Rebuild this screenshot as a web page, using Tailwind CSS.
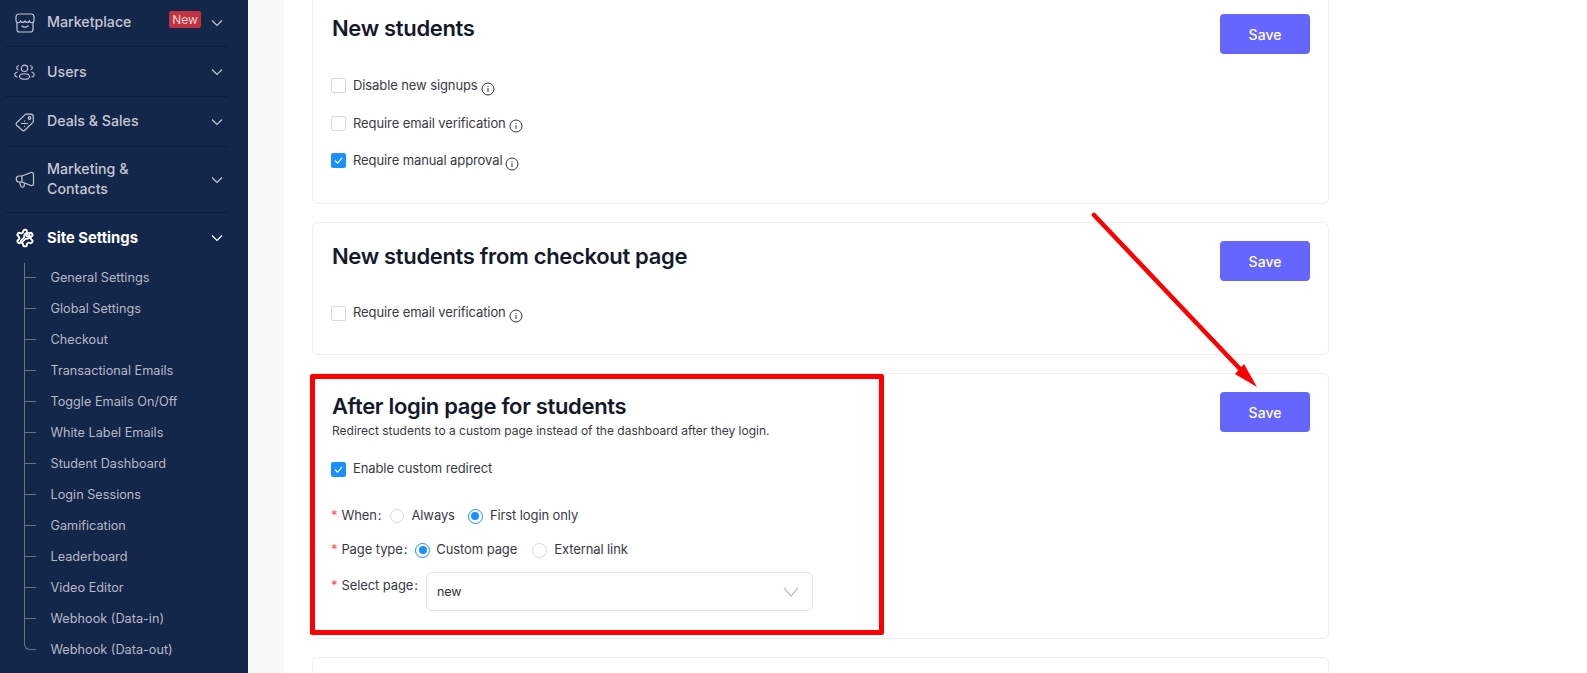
<!DOCTYPE html>
<html lang="en">
<head>
  <meta charset="UTF-8">
  <title>Site Settings</title>
  <script src="https://cdn.jsdelivr.net/npm/@tailwindcss/browser@4"></script>
</head>
<body class="h-[673px] overflow-hidden bg-white font-['Inter',sans-serif]">
<div class="relative flex h-[673px] overflow-hidden">

  <!-- Sidebar -->
  <aside class="w-[248px] h-full shrink-0 bg-[#14264a] text-[#c3c8d4] text-[14.2px] font-medium">
    <div class="mx-[5px] w-[223px]">
      <div class="h-[47px] flex items-center border-b border-[#0f1d38] pl-[10px] pr-[5px]">
        <svg class="w-[20px] h-[20px] mr-[12px] shrink-0" viewBox="0 0 20 20" fill="none" stroke="currentColor" stroke-width="1.2"><path d="M4 1h12a3 3 0 0 1 3 3v3.5a2.3 2.3 0 0 1-4.5.6 2.6 2.6 0 0 1-4.5 0 2.6 2.6 0 0 1-4.5 0A2.3 2.3 0 0 1 1 7.5V4a3 3 0 0 1 3-3Z"/><path d="M2 9.5V16.5A2.5 2.5 0 0 0 4.5 19h11a2.5 2.5 0 0 0 2.500-2.500V9.500"/><path d="M7 13c1.500 1.500 4.500 1.500 6 0" stroke-linecap="round"/></svg>
        <span class="mt-[-2px]">Marketplace</span>
        <span class="ml-auto mr-[10px] mt-[-7px] w-[32px] text-center bg-[#c2323f] text-[#f0d5d5] text-[12px] font-normal rounded-[2px] h-[17px] leading-[17px]">New</span>
        <svg class="w-[12px] h-[12px]" viewBox="0 0 12 12" fill="none" stroke="currentColor" stroke-width="1.2"><path d="M1 3.500 6 8.500 11 3.500"/></svg>
      </div>
      <div class="h-[50px] flex items-center border-b border-[#0f1d38] pl-[9px] pr-[5px]">
        <svg class="w-[21px] h-[16px] mr-[12px] shrink-0" viewBox="0 0 21 16" fill="none" stroke="currentColor" stroke-width="1.1"><circle cx="10.500" cy="4.300" r="3.200"/><ellipse cx="10.500" cy="12.500" rx="5" ry="2.800"/><path d="M5 1.800a2 2 0 0 0-.5 4M16 1.800a2 2 0 0 1 .5 4M3.500 8C1 8.500 .5 10.500 1 11.500c.4.800 1.200 1.300 2.500 1.500M17.500 8c2.500.5 3 2.500 2.500 3.500-.4.800-1.200 1.300-2.500 1.500"/></svg>
        <span>Users</span>
        <svg class="w-[12px] h-[12px] ml-auto" viewBox="0 0 12 12" fill="none" stroke="currentColor" stroke-width="1.2"><path d="M1 3.500 6 8.500 11 3.500"/></svg>
      </div>
      <div class="h-[50px] flex items-center border-b border-[#0f1d38] pl-[10px] pr-[5px]">
        <svg class="w-[20px] h-[20px] mr-[12px] shrink-0" viewBox="0 0 20 20" fill="none" stroke="currentColor" stroke-width="1.2"><path d="M1.700 10.700 9.800 2.900A2.500 2.500 0 0 1 11.500 2.200h4.300A2.500 2.500 0 0 1 18.300 4.700v4.300a2.500 2.500 0 0 1-.7 1.700l-7.800 7.600a1.800 1.800 0 0 1-2.500 0l-5.600-5.100a1.800 1.800 0 0 1 0-2.500Z"/><circle cx="14.500" cy="6" r="1.300"/><path d="M6.500 11.500h6M9.500 9v.2M9.500 14v.2" stroke-linecap="round"/></svg>
        <span class="mt-[-2px]">Deals &amp; Sales</span>
        <svg class="w-[12px] h-[12px] ml-auto" viewBox="0 0 12 12" fill="none" stroke="currentColor" stroke-width="1.2"><path d="M1 3.500 6 8.500 11 3.500"/></svg>
      </div>
      <div class="h-[66px] flex items-center border-b border-[#0f1d38] pl-[10px] pr-[5px]">
        <svg class="w-[20px] h-[20px] mr-[12px] shrink-0" viewBox="0 0 20 20" fill="none" stroke="currentColor" stroke-width="1.2"><path d="M7 6 16 2.500c1.200-.5 2.500.5 2.500 1.800v9.400c0 1.300-1.300 2.300-2.500 1.800L7 12Z"/><path d="M7 6H4.500a3 3 0 0 0-.5 6H7"/><path d="M4.500 12 6 16.500c.4 1 2.400 1 3-.2l.5-2.800"/></svg>
        <span class="mt-[-2px] leading-[20px]">Marketing &amp;<br>Contacts</span>
        <svg class="w-[12px] h-[12px] ml-auto" viewBox="0 0 12 12" fill="none" stroke="currentColor" stroke-width="1.2"><path d="M1 3.500 6 8.500 11 3.500"/></svg>
      </div>
      <div class="h-[50px] flex items-center pl-[10px] pr-[5px] text-white font-bold text-[14.8px]">
        <svg class="w-[20px] h-[20px] mr-[12px] shrink-0" viewBox="0 0 24 24" fill="none" stroke="currentColor" stroke-width="2.300"><path d="M12.220 2h-.44a2 2 0 0 0-2 2v.18a2 2 0 0 1-1 1.730l-.43.25a2 2 0 0 1-2 0l-.15-.08a2 2 0 0 0-2.730.73l-.22.38a2 2 0 0 0 .73 2.730l.15.1a2 2 0 0 1 1 1.720v.51a2 2 0 0 1-1 1.740l-.15.09a2 2 0 0 0-.73 2.730l.22.38a2 2 0 0 0 2.730.73l.15-.08a2 2 0 0 1 2 0l.43.25a2 2 0 0 1 1 1.730V20a2 2 0 0 0 2 2h.44a2 2 0 0 0 2-2v-.18a2 2 0 0 1 1-1.730l.43-.25a2 2 0 0 1 2 0l.15.08a2 2 0 0 0 2.730-.73l.22-.39a2 2 0 0 0-.73-2.730l-.15-.08a2 2 0 0 1-1-1.740v-.5a2 2 0 0 1 1-1.740l.15-.09a2 2 0 0 0 .73-2.730l-.22-.38a2 2 0 0 0-2.730-.73l-.15.08a2 2 0 0 1-2 0l-.43-.25a2 2 0 0 1-1-1.730V4a2 2 0 0 0-2-2z"/><path transform="translate(5 5) scale(.58)" stroke-width="3.500" d="M14.700 6.300a1 1 0 0 0 0 1.400l1.600 1.600a1 1 0 0 0 1.400 0l3.770-3.770a6 6 0 0 1-7.940 7.940l-6.910 6.910a2.120 2.120 0 0 1-3-3l6.910-6.910a6 6 0 0 1 7.940-7.940l-3.760 3.760z"/></svg>
        <span>Site Settings</span>
        <svg class="w-[12px] h-[12px] ml-auto" viewBox="0 0 12 12" fill="none" stroke="currentColor" stroke-width="1.2"><path d="M1 3.500 6 8.500 11 3.500"/></svg>
      </div>
    </div>

    <!-- Sub menu -->
    <ul class="relative ml-[24px] mt-[-1px] pl-[26.5px] text-[12.7px] font-normal text-[#b4b9c6] before:absolute before:left-0 before:top-[1px] before:bottom-[20px] before:border-l before:border-[#6b7280]">
      <li class="relative h-[31px] leading-[31px]"><span class="absolute left-[-26.5px] top-[15px] w-[12px] border-t border-[#6b7280]"></span>General Settings</li>
      <li class="relative h-[31px] leading-[31px]"><span class="absolute left-[-26.5px] top-[15px] w-[12px] border-t border-[#6b7280]"></span>Global Settings</li>
      <li class="relative h-[31px] leading-[31px]"><span class="absolute left-[-26.5px] top-[15px] w-[12px] border-t border-[#6b7280]"></span>Checkout</li>
      <li class="relative h-[31px] leading-[31px]"><span class="absolute left-[-26.5px] top-[15px] w-[12px] border-t border-[#6b7280]"></span>Transactional Emails</li>
      <li class="relative h-[31px] leading-[31px]"><span class="absolute left-[-26.5px] top-[15px] w-[12px] border-t border-[#6b7280]"></span>Toggle Emails On/Off</li>
      <li class="relative h-[31px] leading-[31px]"><span class="absolute left-[-26.5px] top-[15px] w-[12px] border-t border-[#6b7280]"></span>White Label Emails</li>
      <li class="relative h-[31px] leading-[31px]"><span class="absolute left-[-26.5px] top-[15px] w-[12px] border-t border-[#6b7280]"></span>Student Dashboard</li>
      <li class="relative h-[31px] leading-[31px]"><span class="absolute left-[-26.5px] top-[15px] w-[12px] border-t border-[#6b7280]"></span>Login Sessions</li>
      <li class="relative h-[31px] leading-[31px]"><span class="absolute left-[-26.5px] top-[15px] w-[12px] border-t border-[#6b7280]"></span>Gamification</li>
      <li class="relative h-[31px] leading-[31px]"><span class="absolute left-[-26.5px] top-[15px] w-[12px] border-t border-[#6b7280]"></span>Leaderboard</li>
      <li class="relative h-[31px] leading-[31px]"><span class="absolute left-[-26.5px] top-[15px] w-[12px] border-t border-[#6b7280]"></span>Video Editor</li>
      <li class="relative h-[31px] leading-[31px]"><span class="absolute left-[-26.5px] top-[15px] w-[12px] border-t border-[#6b7280]"></span>Webhook (Data-in)</li>
      <li class="relative h-[31px] leading-[31px]"><span class="absolute left-[-26.5px] top-[10px] w-[12px] h-[6px] border-l border-b border-[#6b7280] rounded-bl-[6px]"></span>Webhook (Data-out)</li>
    </ul>
  </aside>

  <!-- Main -->
  <div class="w-[36px] shrink-0 bg-[#f8f8f8]"></div>
  <main class="flex-1 pl-[28px] text-[#3a3a44] text-[13px] tracking-[-0.1px]">
    <div class="w-[1017px] h-[209px] mt-[-5px] rounded-[6px] border border-[#eeeeee] pt-[18px] pl-[18px] pr-[18px] flex justify-between">
      <div>
        <h2 class="mt-[-2px] ml-[1px] h-[32px] text-[22px] leading-[32px] font-semibold tracking-[-0.33px] text-[#14192b]">New students</h2>
        <div class="mt-[23px] h-[37.5px] flex items-center"><span class="w-[15px] h-[15px] rounded-[2px] border border-[#d9d9d9] mr-[7px]"></span>Disable new signups<svg class="w-[14px] h-[14px] ml-[3px] mt-[6px]" viewBox="0 0 14 14" fill="none" stroke="#333" stroke-width="1"><circle cx="7" cy="7" r="6"/><path d="M7 6v4M7 4v1"/></svg></div>
        <div class="h-[37.5px] flex items-center"><span class="w-[15px] h-[15px] rounded-[2px] border border-[#d9d9d9] mr-[7px]"></span>Require email verification<svg class="w-[14px] h-[14px] ml-[3px] mt-[6px]" viewBox="0 0 14 14" fill="none" stroke="#333" stroke-width="1"><circle cx="7" cy="7" r="6"/><path d="M7 6v4M7 4v1"/></svg></div>
        <div class="h-[37.5px] flex items-center"><span class="w-[15px] h-[15px] rounded-[2px] bg-[#1890ff] mr-[7px] flex items-center justify-center"><svg class="w-[9px] h-[9px]" viewBox="0 0 10 10" fill="none" stroke="white" stroke-width="1.2"><path d="M1 5l3 3 5-6"/></svg></span>Require manual approval<svg class="w-[14px] h-[14px] ml-[3px] mt-[6px]" viewBox="0 0 14 14" fill="none" stroke="#333" stroke-width="1"><circle cx="7" cy="7" r="6"/><path d="M7 6v4M7 4v1"/></svg></div>
      </div>
      <button class="w-[90px] h-[40px] rounded-[4px] bg-[#6666ff] text-white text-[14px] font-medium tracking-normal">Save</button>
    </div>

    <div class="w-[1017px] h-[133px] mt-[18px] rounded-[6px] border border-[#eeeeee] pt-[18px] pl-[18px] pr-[18px] flex justify-between">
      <div>
        <h2 class="mt-[-1px] ml-[1px] h-[32px] text-[22px] leading-[32px] font-semibold tracking-[-0.33px] text-[#14192b]">New students from checkout page</h2>
        <div class="mt-[22px] h-[38px] flex items-center"><span class="w-[15px] h-[15px] rounded-[2px] border border-[#d9d9d9] mr-[7px]"></span>Require email verification<svg class="w-[14px] h-[14px] ml-[3px] mt-[6px]" viewBox="0 0 14 14" fill="none" stroke="#333" stroke-width="1"><circle cx="7" cy="7" r="6"/><path d="M7 6v4M7 4v1"/></svg></div>
      </div>
      <button class="w-[90px] h-[40px] rounded-[4px] bg-[#6666ff] text-white text-[14px] font-medium tracking-normal">Save</button>
    </div>

    <div class="w-[1017px] h-[266px] mt-[18px] rounded-[6px] border border-[#eeeeee] pt-[18px] pl-[18px] pr-[18px] flex justify-between">
      <div>
        <h2 class="mt-[-1px] ml-[1px] h-[31px] text-[22px] leading-[30px] font-semibold tracking-[-0.33px] text-[#14192b]">After login page for students</h2>
        <p class="ml-[1px] text-[12px] leading-[18px] tracking-normal">Redirect students to a custom page instead of the dashboard after they login.</p>
        <div class="mt-[10px] h-[38px] flex items-center"><span class="w-[15px] h-[15px] rounded-[2px] bg-[#1890ff] mr-[7px] flex items-center justify-center"><svg class="w-[9px] h-[9px]" viewBox="0 0 10 10" fill="none" stroke="white" stroke-width="1.2"><path d="M1 5l3 3 5-6"/></svg></span>Enable custom redirect</div>
        <div class="mt-[11px] h-[34px] flex items-center"><span class="text-[#ff4d4f] mr-[4px]">*</span>When<span class="ml-[1px]">:</span><span class="ml-[9px] w-[14px] h-[14px] rounded-full border border-[#d9d9d9] mr-[7px]"></span>Always<span class="ml-[13px] w-[15px] h-[15px] rounded-full border border-[#1890ff] mr-[7px] flex items-center justify-center"><span class="w-[8px] h-[8px] rounded-full bg-[#1890ff]"></span></span>First login only</div>
        <div class="h-[34px] flex items-center"><span class="text-[#ff4d4f] mr-[4px]">*</span>Page type<span class="ml-[1px]">:</span><span class="ml-[8px] w-[15px] h-[15px] rounded-full border border-[#1890ff] mr-[6px] flex items-center justify-center"><span class="w-[8px] h-[8px] rounded-full bg-[#1890ff]"></span></span>Custom page<span class="ml-[15px] w-[15px] h-[15px] rounded-full border border-[#d9d9d9] mr-[7px]"></span>External link</div>
        <div class="mt-[5px] flex items-start"><span class="text-[#ff4d4f] mr-[4px] mt-[4px]">*</span><span class="mt-[4px]">Select page<span class="ml-[1px]">:</span></span>
          <div class="ml-[8px] w-[387px] h-[39px] rounded-[6px] border border-[#e5e5e5] pl-[10px] pr-[13px] flex items-center justify-between text-[12.5px] tracking-normal text-[#333]"><span class="mt-[2px]">new</span>
            <svg class="w-[16px] h-[10px]" viewBox="0 0 16 10" fill="none" stroke="#bfbfbf" stroke-width="1.2"><path d="M1 1l7 8 7-8"/></svg>
          </div>
        </div>
      </div>
      <button class="w-[90px] h-[40px] rounded-[4px] bg-[#6666ff] text-white text-[14px] font-medium tracking-normal">Save</button>
    </div>

    <div class="w-[1017px] h-[40px] mt-[18px] rounded-[6px] border border-[#eeeeee]"></div>
  </main>

  <!-- Annotations -->
  <div class="absolute left-[310px] top-[374px] w-[574px] h-[261px] border-[5px] border-[#ff0000] rounded-[2px]"></div>
  <svg class="absolute left-0 top-0 w-[1587px] h-[673px] pointer-events-none" viewBox="0 0 1587 673" fill="none">
    <path d="M1094 215 L1241 370" stroke="#ff0000" stroke-width="4.500" stroke-linecap="round"/>
    <path d="M1257 387 L1235 374 L1244 364 Z" fill="#ff0000"/>
  </svg>
</div>
</body>
</html>
